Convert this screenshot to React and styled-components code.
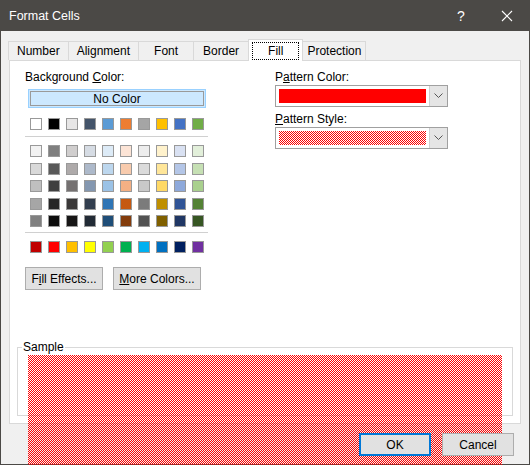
import React from "react";
import styled, { createGlobalStyle } from "styled-components";

const Global = createGlobalStyle`
  html, body { margin: 0; padding: 0; }
  body { font-family: "Liberation Sans", Arial, sans-serif; font-size: 12px; color: #000; }
  u { text-decoration: underline; }
`;

const Win = styled.div`
  width: 530px; height: 465px; box-sizing: border-box;
  border: 1px solid #4b4946; border-top: none;
  background: #f0f0f0; display: flex; flex-direction: column;
`;
const Title = styled.div`
  height: 31px; background: #4b4946; color: #fff; display: flex; align-items: center;
  padding-left: 9px; font-size: 12.5px; margin: 0 -1px;
`;
const TitleText = styled.div` flex: 1; `;
const TitleBtn = styled.div`
  width: 46px; height: 31px; display: flex; align-items: center; justify-content: center; font-size: 14px;
`;
const Tabs = styled.div`
  display: flex; align-items: flex-end; padding: 6px 0 0 8px; height: 23px;
`;
const Tab = styled.div`
  height: ${p => (p.$sel ? 22 : 19)}px; box-sizing: border-box;
  padding: 0 ${p => p.$pad}px; display: flex; align-items: center; justify-content: center;
  border: 1px solid #d9d9d9; border-bottom: none; margin-left: -1px;
  background: ${p => (p.$sel ? "#fff" : "#f0f0f0")};
  position: relative; z-index: ${p => (p.$sel ? 2 : 1)};
  margin-bottom: ${p => (p.$sel ? -1 : 0)}px;
  span { ${p => p.$sel && "outline: 1px dotted #000; padding: 1px 15px;"} }
`;
const Panel = styled.div`
  margin: 0 8px; height: 364px; box-sizing: border-box; background: #fff;
  border: 1px solid #d9d9d9; display: flex; flex-direction: column;
`;
const Top = styled.div` display: flex; padding: 9px 0 0 15px; gap: 67px; `;
const LeftCol = styled.div` width: 183px; display: flex; flex-direction: column; `;
const RightCol = styled.div` width: 173px; display: flex; flex-direction: column; `;
const Label = styled.div` height: 15px; line-height: 15px; margin-top: ${p => p.$mt || 0}px; margin-bottom: ${p => p.$mb || 0}px; `;
const NoColor = styled.div`
  margin: 0 2px 0 3px; height: 19px; box-sizing: border-box; background: #cce8ff;
  border: 1px solid #99d1ff; outline: 1px solid #9a9a9a; outline-offset: -3px;
  display: flex; align-items: center; justify-content: center;
`;
const Row = styled.div` display: flex; gap: 6px; padding-left: 5px; margin-top: ${p => p.$mt || 0}px; `;
const Sw = styled.div`
  width: 12px; height: 12px; box-sizing: border-box; border: 1px solid #999; background: ${p => p.$c};
`;
const Sep = styled.div` height: 1px; background: #d0d0d0; margin: ${p => p.$t || 6}px 0 8px; `;
const Buttons = styled.div` display: flex; gap: 10px; margin-top: 14px; `;
const Btn = styled.div`
  width: ${p => p.$w}px; height: 23px; box-sizing: border-box; background: #e1e1e1;
  border: 1px solid ${p => (p.$def ? "#0078d7" : "#adadad")};
  ${p => p.$def && "box-shadow: inset 0 0 0 1px #0078d7;"}
  display: flex; align-items: center; justify-content: center;
`;
const Combo = styled.div`
  height: 22px; box-sizing: border-box; border: 1px solid #a0a0a0; background: #fff; display: flex;
  margin-bottom: 8px;
`;
const ComboFill = styled.div`
  flex: 1; margin: 3px; background: #ff0000; display: flex;
`;
const ComboPat = styled.div` flex: 1; margin: 3px; display: flex; `;
const Arrow = styled.div`
  width: 17px; background: #e5e5e5; border-left: 1px solid #cfcfcf; display: flex; align-items: center; justify-content: center;
`;
const Sample = styled.fieldset`
  margin: auto 7px 7px 7px; height: 75px; box-sizing: border-box; border: 1px solid #d9d9d9;
  padding: 0 10px 8px 10px; display: flex;
  legend { padding: 0 1px; margin-left: -6px; line-height: 12px; }
`;
const SampleBox = styled.div` flex: 1; display: flex; margin-top: 2px; `;
const Footer = styled.div` display: flex; justify-content: flex-end; gap: 11px; padding: 9px 15px 0 0; `;

const Dots = ({ id }) => (
  <svg width="100%" height="100%" style={{ display: "block" }}>
    <defs>
      <pattern id={id} width="2" height="2" patternUnits="userSpaceOnUse">
        <rect x="0" y="0" width="1" height="1" fill="#ff0000" />
        <rect x="1" y="1" width="1" height="1" fill="#ff0000" />
      </pattern>
    </defs>
    <rect width="100%" height="100%" fill={`url(#${id})`} shapeRendering="crispEdges" />
  </svg>
);

const theme = ["#ffffff","#000000","#e7e6e6","#44546a","#5b9bd5","#ed7d31","#a5a5a5","#ffc000","#4472c4","#70ad47"];
const tints = [
  ["#f2f2f2","#7f7f7f","#d0cece","#d6dce4","#ddebf7","#fce4d6","#ededed","#fff2cc","#d9e1f2","#e2efda"],
  ["#d9d9d9","#595959","#aeaaaa","#adb9ca","#bdd7ee","#f8cbad","#dbdbdb","#ffe699","#b4c6e7","#c6e0b4"],
  ["#bfbfbf","#404040","#757171","#8497b0","#9bc2e6","#f4b084","#c9c9c9","#ffd966","#8ea9db","#a9d08e"],
  ["#a6a6a6","#262626","#3a3838","#333f4f","#2f75b5","#c65911","#7b7b7b","#bf8f00","#305496","#548235"],
  ["#808080","#0d0d0d","#171616","#222b35","#1f4e78","#833c0c","#525252","#806000","#203764","#375623"],
];
const std = ["#c00000","#ff0000","#ffc000","#ffff00","#92d050","#00b050","#00b0f0","#0070c0","#002060","#7030a0"];

const Chevron = () => (
  <svg width="9" height="6" viewBox="0 0 9 6"><path d="M0.5 0.5 L4.5 4.5 L8.5 0.5" fill="none" stroke="#555" strokeWidth="1" /></svg>
);

export default function App() {
  return (
    <>
      <Global />
      <Win>
        <Title>
          <TitleText>Format Cells</TitleText>
          <TitleBtn>?</TitleBtn>
          <TitleBtn>
            <svg width="12" height="12" viewBox="0 0 12 12"><path d="M1 1L11 11M11 1L1 11" stroke="#fff" strokeWidth="1.1" /></svg>
          </TitleBtn>
        </Title>
        <Tabs>
          <Tab $pad={8}><span>Number</span></Tab>
          <Tab $pad={8}><span>Alignment</span></Tab>
          <Tab $pad={15}><span>Font</span></Tab>
          <Tab $pad={9}><span>Border</span></Tab>
          <Tab $sel $pad={4}><span>Fill</span></Tab>
          <Tab $pad={4}><span>Protection</span></Tab>
        </Tabs>
        <Panel>
          <Top>
            <LeftCol>
              <Label $mb={4}>Background <u>C</u>olor:</Label>
              <NoColor>No Color</NoColor>
              <Row $mt={10}>{theme.map(c => <Sw key={c} $c={c} />)}</Row>
              <Sep $t={6} />
              {tints.map((r, i) => (
                <Row key={i} $mt={i ? 5.5 : 0}>{r.map(c => <Sw key={c} $c={c} />)}</Row>
              ))}
              <Sep $t={5} />
              <Row>{std.map(c => <Sw key={c} $c={c} />)}</Row>
              <Buttons>
                <Btn $w={78}>F<u>i</u>ll Effects...</Btn>
                <Btn $w={88}><u>M</u>ore Colors...</Btn>
              </Buttons>
            </LeftCol>
            <RightCol>
              <Label>P<u>a</u>ttern Color:</Label>
              <Combo><ComboFill /><Arrow><Chevron /></Arrow></Combo>
              <Label $mt={-3}><u>P</u>attern Style:</Label>
              <Combo><ComboPat><Dots id="pc" /></ComboPat><Arrow><Chevron /></Arrow></Combo>
            </RightCol>
          </Top>
          <Sample>
            <legend>Sample</legend>
            <SampleBox><Dots id="ps" /></SampleBox>
          </Sample>
        </Panel>
        <Footer>
          <Btn $w={72} $def>OK</Btn>
          <Btn $w={72}>Cancel</Btn>
        </Footer>
      </Win>
    </>
  );
}
